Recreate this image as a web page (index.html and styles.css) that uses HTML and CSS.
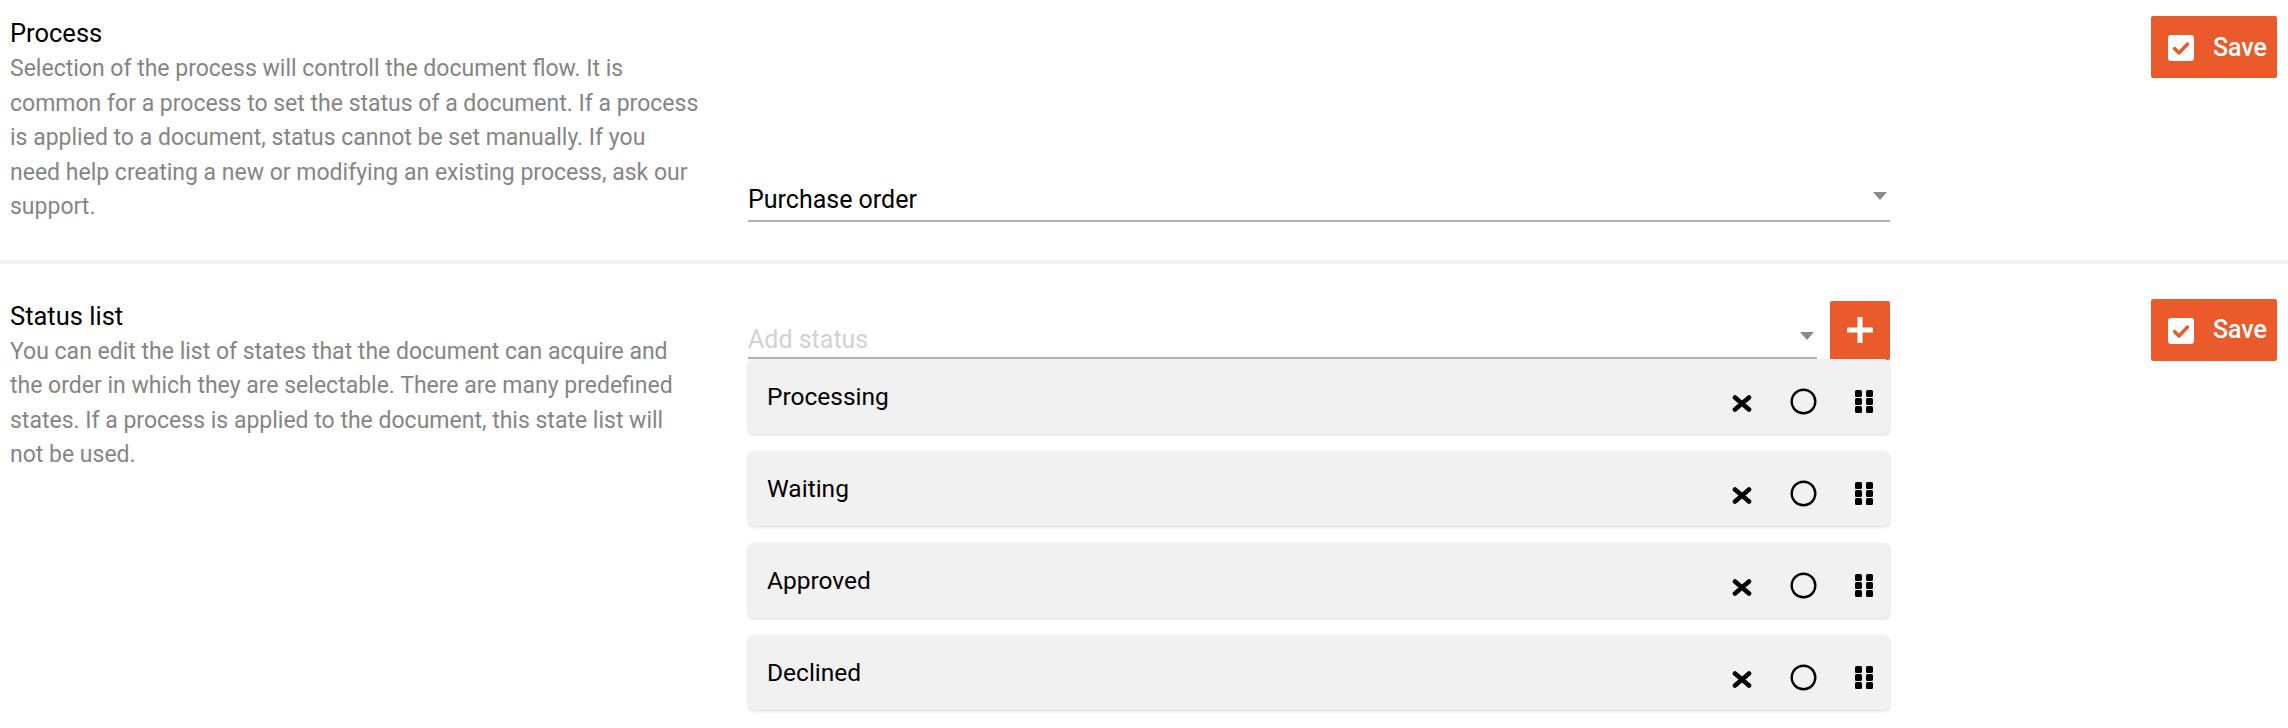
FILE: index.html
```html
<!DOCTYPE html>
<html lang="en">
<head>
    <meta charset="UTF-8">
    <meta name="viewport" content="width=device-width, initial-scale=1.0">
    <title>Document settings</title>
    <link rel="stylesheet" href="styles.css">
</head>
<body>
    <div class="settings">
        <section class="setting setting-process">
            <div class="setting-info">
                <h2>Process</h2>
                <p>Selection of the process will controll the document flow. It is common for a process to set the status of a document. If a process is applied to a document, status cannot be set manually. If you need&nbsp;help creating a new or modifying an existing process, ask our support.</p>
            </div>
            <div class="setting-control control-bottom">
                <div class="select">
                    <span class="select-value">Purchase order</span>
                    <span class="select-arrow"></span>
                </div>
            </div>
            <div class="setting-actions">
                <button class="save-btn">
                    <svg width="26" height="26" viewBox="0 0 26 26"><rect x="0" y="0" width="26" height="26" rx="3" fill="#fff"/><polyline points="6.5,13.5 11,18 19.5,9" fill="none" stroke="#ea5a2a" stroke-width="3.4" stroke-linecap="round" stroke-linejoin="round"/></svg>
                    Save
                </button>
            </div>
        </section>

        <section class="setting setting-status">
            <div class="setting-info">
                <h2>Status list</h2>
                <p>You can edit the list of states that the document can acquire and the order in which they are selectable. There are many predefined states. If a process is applied to the document, this state list will not be used.</p>
            </div>
            <div class="setting-control control-list">
                <div class="add-row">
                    <div class="select select-add">
                        <span class="select-placeholder">Add status</span>
                        <span class="select-arrow"></span>
                    </div>
                    <button class="add-btn" title="Add">
                        <svg width="26" height="26" viewBox="0 0 26 26"><path d="M13 1.5v23M1.5 13h23" stroke="#fff" stroke-width="5" stroke-linecap="round"/></svg>
                    </button>
                </div>

                <ul class="status-list">
                    <li class="status-item">
                        <span class="status-name">Processing</span>
                        <span class="status-icons">
                            <svg class="icon-remove" width="20" height="17" viewBox="0 0 20 17"><path d="M3 2.5l14 12M17 2.5l-14 12" stroke="#000" stroke-width="4.6" stroke-linecap="round"/></svg>
                            <svg class="icon-circle" width="27" height="27" viewBox="0 0 27 27"><circle cx="13.5" cy="13.5" r="11.8" fill="none" stroke="#000" stroke-width="2.4"/></svg>
                            <svg class="icon-grip" width="18" height="23" viewBox="0 0 18 23"><rect x="0" y="0" width="7" height="7" rx="1.6"/><rect x="11" y="0" width="7" height="7" rx="1.6"/><rect x="0" y="8" width="7" height="7" rx="1.6"/><rect x="11" y="8" width="7" height="7" rx="1.6"/><rect x="0" y="16" width="7" height="7" rx="1.6"/><rect x="11" y="16" width="7" height="7" rx="1.6"/></svg>
                        </span>
                    </li>
                    <li class="status-item">
                        <span class="status-name">Waiting</span>
                        <span class="status-icons">
                            <svg class="icon-remove" width="20" height="17" viewBox="0 0 20 17"><path d="M3 2.5l14 12M17 2.5l-14 12" stroke="#000" stroke-width="4.6" stroke-linecap="round"/></svg>
                            <svg class="icon-circle" width="27" height="27" viewBox="0 0 27 27"><circle cx="13.5" cy="13.5" r="11.8" fill="none" stroke="#000" stroke-width="2.4"/></svg>
                            <svg class="icon-grip" width="18" height="23" viewBox="0 0 18 23"><rect x="0" y="0" width="7" height="7" rx="1.6"/><rect x="11" y="0" width="7" height="7" rx="1.6"/><rect x="0" y="8" width="7" height="7" rx="1.6"/><rect x="11" y="8" width="7" height="7" rx="1.6"/><rect x="0" y="16" width="7" height="7" rx="1.6"/><rect x="11" y="16" width="7" height="7" rx="1.6"/></svg>
                        </span>
                    </li>
                    <li class="status-item">
                        <span class="status-name">Approved</span>
                        <span class="status-icons">
                            <svg class="icon-remove" width="20" height="17" viewBox="0 0 20 17"><path d="M3 2.5l14 12M17 2.5l-14 12" stroke="#000" stroke-width="4.6" stroke-linecap="round"/></svg>
                            <svg class="icon-circle" width="27" height="27" viewBox="0 0 27 27"><circle cx="13.5" cy="13.5" r="11.8" fill="none" stroke="#000" stroke-width="2.4"/></svg>
                            <svg class="icon-grip" width="18" height="23" viewBox="0 0 18 23"><rect x="0" y="0" width="7" height="7" rx="1.6"/><rect x="11" y="0" width="7" height="7" rx="1.6"/><rect x="0" y="8" width="7" height="7" rx="1.6"/><rect x="11" y="8" width="7" height="7" rx="1.6"/><rect x="0" y="16" width="7" height="7" rx="1.6"/><rect x="11" y="16" width="7" height="7" rx="1.6"/></svg>
                        </span>
                    </li>
                    <li class="status-item">
                        <span class="status-name">Declined</span>
                        <span class="status-icons">
                            <svg class="icon-remove" width="20" height="17" viewBox="0 0 20 17"><path d="M3 2.5l14 12M17 2.5l-14 12" stroke="#000" stroke-width="4.6" stroke-linecap="round"/></svg>
                            <svg class="icon-circle" width="27" height="27" viewBox="0 0 27 27"><circle cx="13.5" cy="13.5" r="11.8" fill="none" stroke="#000" stroke-width="2.4"/></svg>
                            <svg class="icon-grip" width="18" height="23" viewBox="0 0 18 23"><rect x="0" y="0" width="7" height="7" rx="1.6"/><rect x="11" y="0" width="7" height="7" rx="1.6"/><rect x="0" y="8" width="7" height="7" rx="1.6"/><rect x="11" y="8" width="7" height="7" rx="1.6"/><rect x="0" y="16" width="7" height="7" rx="1.6"/><rect x="11" y="16" width="7" height="7" rx="1.6"/></svg>
                        </span>
                    </li>
                </ul>
            </div>
            <div class="setting-actions">
                <button class="save-btn">
                    <svg width="26" height="26" viewBox="0 0 26 26"><rect x="0" y="0" width="26" height="26" rx="3" fill="#fff"/><polyline points="6.5,13.5 11,18 19.5,9" fill="none" stroke="#ea5a2a" stroke-width="3.4" stroke-linecap="round" stroke-linejoin="round"/></svg>
                    Save
                </button>
            </div>
        </section>
    </div>
</body>
</html>
```

FILE: styles.css
```css
body {
    margin: 0;
    font-family: Roboto, 'Liberation Sans', Arial, sans-serif;
    background-color: #fff;
    color: #111;
    overflow: hidden;
}

.setting {
    display: grid;
    grid-template-columns: 692px 1142px 1fr; /* info | control | actions */
    column-gap: 46px;
    padding: 34px 11px 0 10px;
}
.setting-process {
    padding-top: 15px;
    padding-bottom: 35px;
    border-bottom: 4px solid #f0f0f0;
}

.setting-info h2 {
    margin: 0;
    font-size: 25.5px;
    font-weight: 400;
    line-height: 37px;
    color: #000;
}
.setting-info p {
    margin: 0;
    font-size: 23px;
    line-height: 34.5px;
    color: #858585;
}

.setting-control {
    display: flex;
    flex-direction: column;
}
.control-bottom {
    justify-content: flex-end;
    padding-bottom: 3px;
}
.control-list {
    padding-top: 3px;
}

.setting-actions {
    display: flex;
    justify-content: flex-end;
    align-items: flex-start;
    padding-top: 1px;
}

/* underlined select, material style */
.select {
    position: relative;
    font-size: 25px;
    line-height: 32px;
    border-bottom: 2px solid #b0b0b0;
    padding-bottom: 4px;
}
.select-value {
    color: #000;
}
.select-placeholder {
    color: #d2d2d2;
}
.select-arrow {
    position: absolute;
    right: 3px;
    top: 8px;
    width: 0;
    height: 0;
    border-left: 7.5px solid transparent;
    border-right: 7.5px solid transparent;
    border-top: 8px solid #8a8a8a;
}

.add-row {
    display: flex;
    align-items: flex-end;
    gap: 13px;
}
.select-add {
    flex-grow: 1;
    padding-bottom: 1px;
    margin-bottom: 1px;
}

.add-btn {
    width: 60px;
    height: 59px;
    border: none;
    border-radius: 2px;
    background-color: #ea5a2a;
    display: flex;
    align-items: center;
    justify-content: center;
    padding: 0;
    cursor: pointer;
}

.save-btn {
    display: flex;
    align-items: center;
    gap: 19px;
    height: 62px;
    padding: 0 10px 0 17px;
    border: none;
    border-radius: 2px;
    background-color: #ea5a2a;
    color: #fff;
    font-family: inherit;
    font-size: 25px;
    font-weight: 500;
    cursor: pointer;
}
.save-btn svg {
    margin-top: 2px;
}

.status-list {
    list-style: none;
    margin: -1px 0 0 0;
    padding: 0;
}
.status-item {
    display: flex;
    align-items: center;
    justify-content: space-between;
    height: 75px;
    margin-bottom: 17px;
    padding: 0 17px 0 19px;
    background-color: #f1f1f1;
    border-radius: 6px;
    box-shadow: 0 1px 3px rgba(0,0,0,0.16);
    box-sizing: border-box;
}
.status-name {
    font-size: 24.5px;
    color: #000;
}
.status-icons {
    display: flex;
    align-items: center;
    gap: 38px;
    margin-top: 10px;
}
.icon-remove {
    margin-top: 4px;
}
.icon-grip {
    fill: #000;
}
```
